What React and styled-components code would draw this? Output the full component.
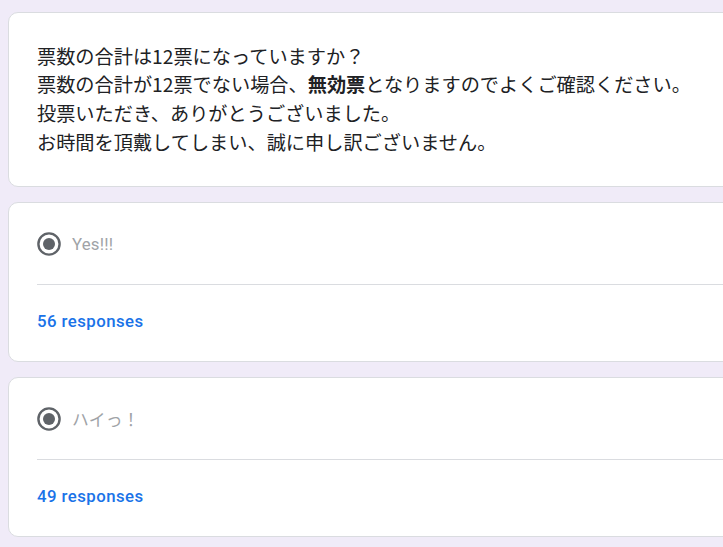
import React from "react";
import styled, { createGlobalStyle } from "styled-components";

const Global = createGlobalStyle`
  html, body {
    margin: 0;
    padding: 0;
    background: #f0ebf8;
    overflow: hidden;
  }
  body {
    font-family: Roboto, "Noto Sans CJK JP", sans-serif;
  }
`;

const Page = styled.div`
  display: flex;
  flex-direction: column;
  gap: 15px;
  padding: 12px 0 0 8px;
  width: 820px;
`;

const Card = styled.section`
  background: #fff;
  border: 1px solid #dadce0;
  border-radius: 10px;
  display: flex;
  flex-direction: column;
`;

const Description = styled.div`
  padding: 28.5px 28px 29.3px;
  font-family: "Noto Sans CJK JP", sans-serif;
  font-size: 19.2px;
  line-height: 28.8px;
  color: #202124;
`;

const Line = styled.div`
  white-space: nowrap;
`;

const Bold = styled.b`
  font-weight: 700;
`;

const OptionRow = styled.div`
  display: flex;
  align-items: center;
  gap: 11px;
  height: 24px;
  margin: 0 0 0 28px;
  padding: 29px 0 28px;
  border-bottom: 1px solid #dadce0;
`;

const OptionLabel = styled.span`
  font-family: Roboto, "Noto Sans CJK JP", sans-serif;
  font-size: 16.8px;
  color: #a0a3a7;
  letter-spacing: 0.2px;
`;

const Footer = styled.div`
  padding: 25px 28px 29px;
  font-family: Roboto, sans-serif;
  font-weight: 500;
  font-size: 16.8px;
  line-height: 22px;
  letter-spacing: 0.45px;
  color: #1a73e8;
`;

const Radio = () => (
  <svg width="24" height="24" viewBox="0 0 24 24">
    <circle cx="12" cy="12" r="10.6" fill="none" stroke="#5f6368" strokeWidth="2.4" />
    <circle cx="12" cy="12" r="6" fill="#5f6368" />
  </svg>
);

const options = [
  { label: "Yes!!!", count: 56 },
  { label: "ハイっ！", count: 49 },
];

export default function App() {
  return (
    <>
      <Global />
      <Page>
        <Card>
          <Description>
            <Line>票数の合計は12票になっていますか？</Line>
            <Line>
              票数の合計が12票でない場合、<Bold>無効票</Bold>となりますのでよくご確認ください。
            </Line>
            <Line>投票いただき、ありがとうございました。</Line>
            <Line>お時間を頂戴してしまい、誠に申し訳ございません。</Line>
          </Description>
        </Card>
        {options.map((o) => (
          <Card key={o.label}>
            <OptionRow>
              <Radio />
              <OptionLabel>{o.label}</OptionLabel>
            </OptionRow>
            <Footer>{o.count} responses</Footer>
          </Card>
        ))}
      </Page>
    </>
  );
}
